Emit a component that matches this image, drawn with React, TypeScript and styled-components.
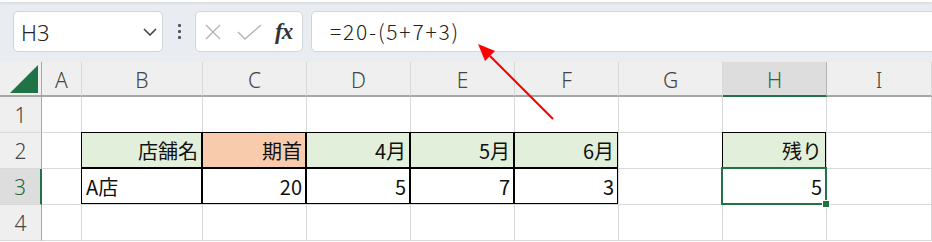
import { Fragment } from "react";
import styled, { createGlobalStyle } from "styled-components";

const GlobalStyle = createGlobalStyle`
  html, body {
    margin: 0;
    padding: 0;
    background: #ffffff;
  }
  body {
    font-family: "Noto Sans CJK JP", "Noto Sans", sans-serif;
    overflow: hidden;
  }
`;

const COLS = ["A", "B", "C", "D", "E", "F", "G", "H", "I"];

interface CellData {
  text?: string;
  fill?: string;
  table?: boolean;
  left?: boolean;
  selected?: boolean;
}

// rows 1..4, columns A..I
const rows: CellData[][] = [
  [{}, {}, {}, {}, {}, {}, {}, {}, {}],
  [
    {},
    { text: "店舗名", fill: "#e2efda", table: true },
    { text: "期首", fill: "#f8cbad", table: true },
    { text: "4月", fill: "#e2efda", table: true },
    { text: "5月", fill: "#e2efda", table: true },
    { text: "6月", fill: "#e2efda", table: true },
    {},
    { text: "残り", fill: "#e2efda", table: true },
    {},
  ],
  [
    {},
    { text: "A店", table: true, left: true },
    { text: "20", table: true },
    { text: "5", table: true },
    { text: "7", table: true },
    { text: "3", table: true },
    {},
    { text: "5", table: true, selected: true },
    {},
  ],
  [{}, {}, {}, {}, {}, {}, {}, {}, {}],
];

function App() {
  return (
    <Page>
      <GlobalStyle />
      <TopStrip />
      <FormulaBar>
        <NameBox>
          <span>H3</span>
          <svg width="14" height="8" viewBox="0 0 14 8">
            <path d="M1 1 L7 7 L13 1" fill="none" stroke="#444" strokeWidth="1.6" />
          </svg>
        </NameBox>
        <Dots>
          <i />
          <i />
          <i />
        </Dots>
        <FuncBox>
          <svg width="18" height="16" viewBox="0 0 18 16">
            <path d="M2 1 L16 15 M16 1 L2 15" stroke="#b4b4b4" strokeWidth="1.4" />
          </svg>
          <svg width="25" height="16" viewBox="0 0 25 16">
            <path d="M1 8 L8 15 L24 1" fill="none" stroke="#b4b4b4" strokeWidth="1.4" />
          </svg>
          <Fx>fx</Fx>
        </FuncBox>
        <FormulaInput>=20-(5+7+3)</FormulaInput>
      </FormulaBar>

      <Sheet>
        <Corner>
          <svg width="28" height="28" viewBox="0 0 28 28">
            <polygon points="28,0 28,28 0,28" fill="#217346" />
          </svg>
        </Corner>
        {COLS.map((c) => (
          <ColHead key={c} $active={c === "H"}>
            {c}
          </ColHead>
        ))}
        {rows.map((r, i) => (
          <Fragment key={"row" + i}>
            <RowHead $active={i === 2}>{i + 1}</RowHead>
            {r.map((cell, j) => (
              <Cell
                key={i + "-" + j}
                $fill={cell.fill}
                $table={cell.table}
                $left={cell.left}
                $selected={cell.selected}
              >
                {cell.text}
                {cell.selected && <Handle />}
              </Cell>
            ))}
          </Fragment>
        ))}
      </Sheet>

      <Arrow width="100" height="90" viewBox="0 0 100 90">
        <line x1="87" y1="83" x2="24" y2="20" stroke="#ff0000" strokeWidth="2.2" />
        <polygon points="12,8 29,15 19,25" fill="#ff0000" />
      </Arrow>
    </Page>
  );
}

const Page = styled.div`
  position: relative;
  width: 932px;
  height: 242px;
  background: #e9edf2;
  overflow: hidden;
`;

const TopStrip = styled.div`
  height: 2px;
  background: #ffffff;
  box-shadow: 0 1px 3px rgba(0, 0, 0, 0.12);
`;

const FormulaBar = styled.div`
  display: flex;
  align-items: center;
  height: 60px;
  padding: 0 0 1px 13px;
  box-sizing: border-box;
`;

const Box = styled.div`
  height: 41px;
  box-sizing: border-box;
  background: #ffffff;
  border: 1px solid #d2d4d7;
  border-radius: 5px;
  display: flex;
  align-items: center;
`;

const NameBox = styled(Box)`
  width: 150px;
  padding: 0 5px 0 7px;
  justify-content: space-between;
  font-family: "Noto Sans", sans-serif;
  font-size: 22px;
  font-weight: 300;
  color: #222;
`;

const Dots = styled.div`
  width: 32px;
  display: flex;
  flex-direction: column;
  align-items: center;
  gap: 3px;
  i {
    width: 3px;
    height: 3px;
    background: #555;
    border-radius: 1px;
  }
`;

const FuncBox = styled(Box)`
  width: 108px;
  padding: 0 6px 0 8px;
  gap: 9px;
  svg:nth-child(2) {
    margin-left: 6px;
  }
`;

const Fx = styled.span`
  font-family: "Liberation Serif", "DejaVu Serif", serif;
  font-style: italic;
  font-weight: bold;
  font-size: 23px;
  color: #333;
  margin-left: 4px;
  letter-spacing: -1px;
`;

const FormulaInput = styled(Box)`
  flex: 1;
  margin-left: 8px;
  margin-right: -20px;
  padding: 0 0 1px 18px;
  font-family: "Noto Sans CJK JP", sans-serif;
  font-size: 21px;
  font-weight: 300;
  letter-spacing: 1.8px;
  color: #222;
`;

const Sheet = styled.div`
  display: grid;
  grid-template-columns: 42px 40px 121px repeat(6, 104px) 1fr;
  grid-template-rows: 35px repeat(4, 36px) 1fr;
  height: 182px;
  background: #ffffff;
`;

const HeadBase = styled.div`
  background: #efefef;
  display: flex;
  align-items: center;
  justify-content: center;
  font-family: "Noto Sans", sans-serif;
  font-weight: 300;
  font-size: 21px;
  color: #444;
  box-sizing: border-box;
`;

const Corner = styled(HeadBase)`
  border-right: 1px solid #a6a6a6;
  border-bottom: 2px solid #a6a6a6;
  align-items: flex-end;
  justify-content: flex-end;
  padding: 0 3px 2px 0;
`;

const ColHead = styled(HeadBase)<{ $active?: boolean }>`
  background: ${(p) => (p.$active ? "#dddddd" : "#efefef")};
  color: ${(p) => (p.$active ? "#1d6b40" : "#444")};
  border-right: 1px solid ${(p) => (p.$active ? "#b4b4b4" : "#d9d9d9")};
  border-bottom: 2px solid ${(p) => (p.$active ? "#217346" : "#a6a6a6")};
  padding-top: 2px;
`;

const RowHead = styled(HeadBase)<{ $active?: boolean }>`
  background: ${(p) => (p.$active ? "#dddddd" : "#efefef")};
  color: ${(p) => (p.$active ? "#1d6b40" : "#444")};
  border-right: ${(p) => (p.$active ? "2px solid #217346" : "1px solid #a6a6a6")};
  border-bottom: 1px solid #d9d9d9;
`;

const Cell = styled.div<{
  $fill?: string;
  $table?: boolean;
  $left?: boolean;
  $selected?: boolean;
}>`
  position: relative;
  box-sizing: border-box;
  background: ${(p) => p.$fill || "#ffffff"};
  border-right: 1px solid #d9d9d9;
  border-bottom: 1px solid #d9d9d9;
  display: flex;
  align-items: center;
  justify-content: ${(p) => (p.$left ? "flex-start" : "flex-end")};
  padding: 0 4px 0 4px;
  font-family: "Noto Sans CJK JP", sans-serif;
  font-size: 20px;
  color: #111;

  &::after {
    content: "";
    display: ${(p) => (p.$table || p.$selected ? "block" : "none")};
    position: absolute;
    top: ${(p) => (p.$selected ? "-2px" : "-1px")};
    left: ${(p) => (p.$selected ? "-2px" : "-1px")};
    right: ${(p) => (p.$selected ? "-1px" : "0")};
    bottom: ${(p) => (p.$selected ? "-1px" : "0")};
    border: ${(p) => (p.$selected ? "2px solid #217346" : "1px solid #000")};
    pointer-events: none;
    z-index: ${(p) => (p.$selected ? 3 : 1)};
  }
`;

const Handle = styled.span`
  position: absolute;
  right: -4px;
  bottom: -4px;
  width: 6px;
  height: 6px;
  background: #217346;
  border: 1px solid #ffffff;
  z-index: 4;
`;

const Arrow = styled.svg`
  position: absolute;
  left: 466px;
  top: 36px;
  overflow: visible;
`;

export default App;
